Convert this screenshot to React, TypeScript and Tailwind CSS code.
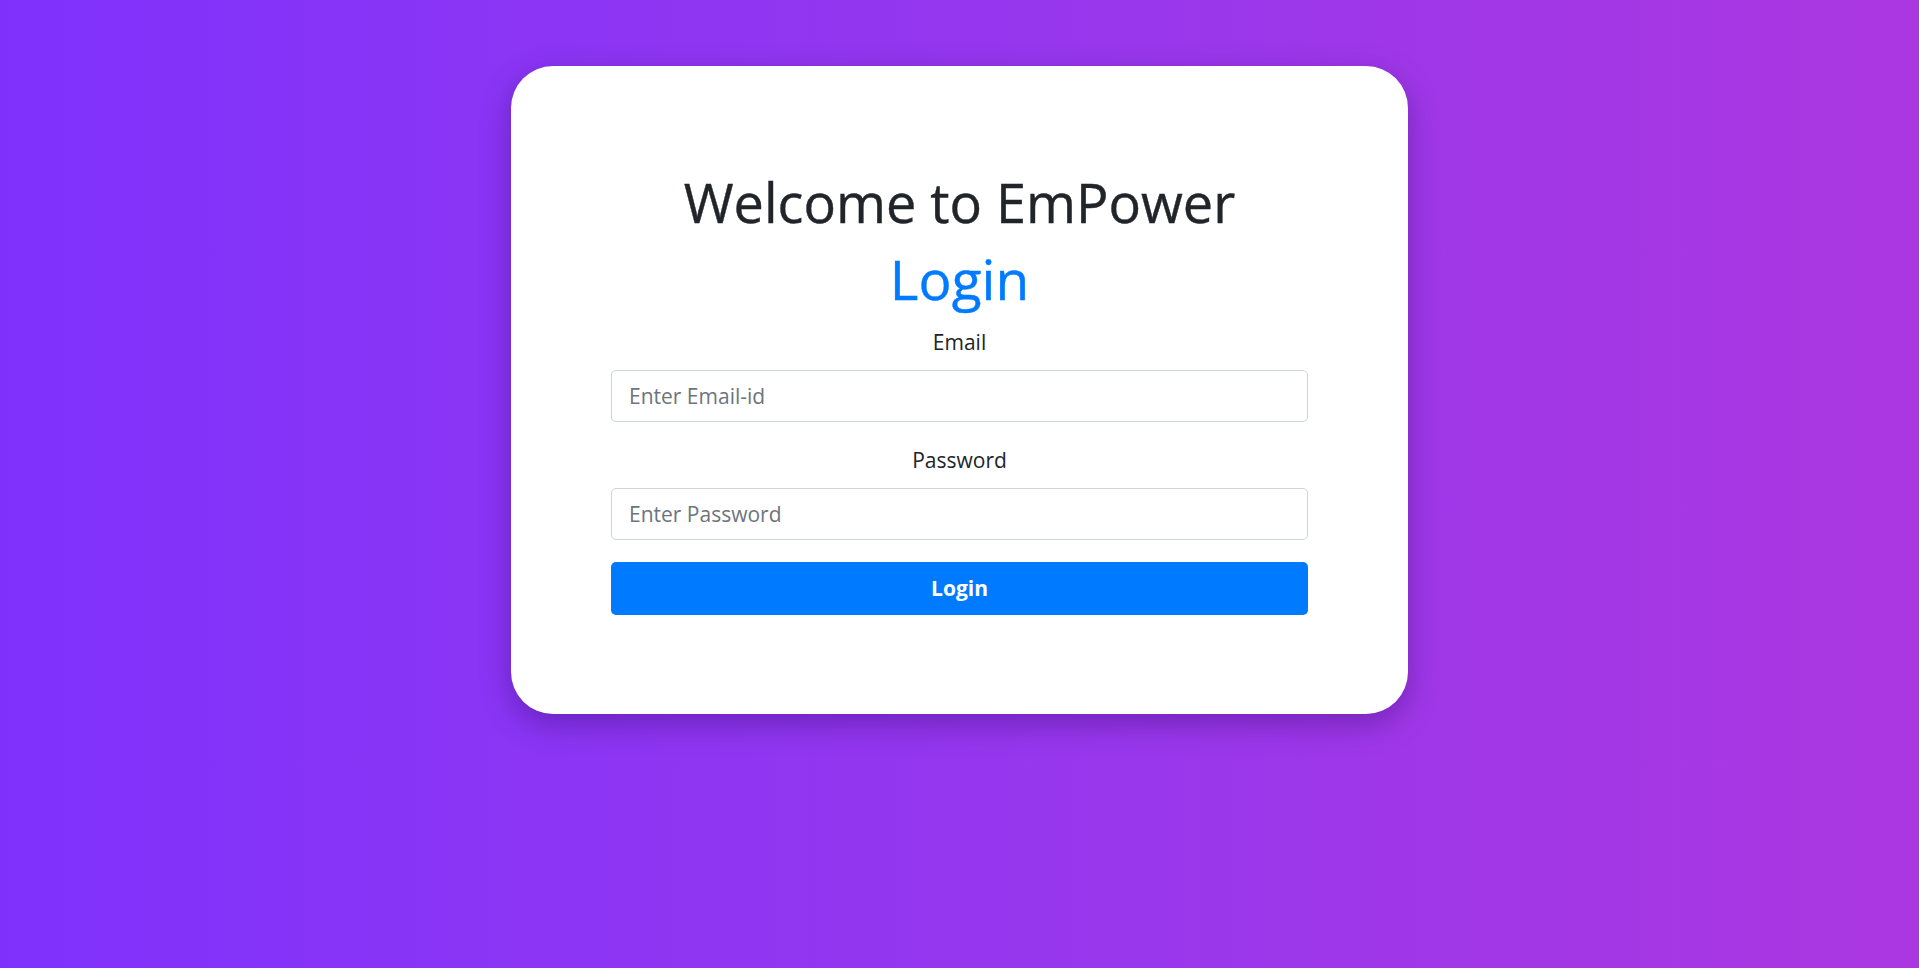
const fieldClass =
  "w-full h-[52px] px-[17px] rounded-[5px] border border-[#ced4da] bg-white text-[21px] text-[#495057] placeholder:text-[#6c757d] outline-none";

export default function App() {
  return (
    <div
      className="min-h-screen w-full bg-gradient-to-r from-[#7f31fc] to-[#ab37e1] pt-[66px]"
      style={{ fontFamily: '"Open Sans", "Noto Sans", Arial, sans-serif' }}
    >
      <div className="mx-auto w-[897px] h-[648px] rounded-[42px] bg-white px-[100px] pt-[103px] shadow-[0_10px_30px_rgba(40,0,90,0.35)]">
        <div className="flex flex-col items-center text-center">
          <h1 className="text-[54px] leading-[66px] text-[#212529] [-webkit-text-stroke:0.4px_#212529]">Welcome to EmPower</h1>
          <h2 className="mt-[11px] text-[55px] leading-[66px] text-[#007bff] [-webkit-text-stroke:0.4px_#007bff]">Login</h2>
        </div>

        <form className="mt-[14px]" onSubmit={(e) => e.preventDefault()}>
          <div className="mb-[22px]">
            <label className="block text-center text-[21px] leading-[33px] text-[#212529] mb-[11px]">
              Email
            </label>
            <input type="email" placeholder="Enter Email-id" className={fieldClass} />
          </div>
          <div className="mb-[22px]">
            <label className="block text-center text-[21px] leading-[33px] text-[#212529] mb-[11px]">
              Password
            </label>
            <input type="password" placeholder="Enter Password" className={fieldClass} />
          </div>
          <button
            type="submit"
            className="w-full h-[53px] rounded-[5px] bg-[#007bff] text-white text-[21px] font-bold"
          >
            Login
          </button>
        </form>
      </div>
    </div>
  );
}
